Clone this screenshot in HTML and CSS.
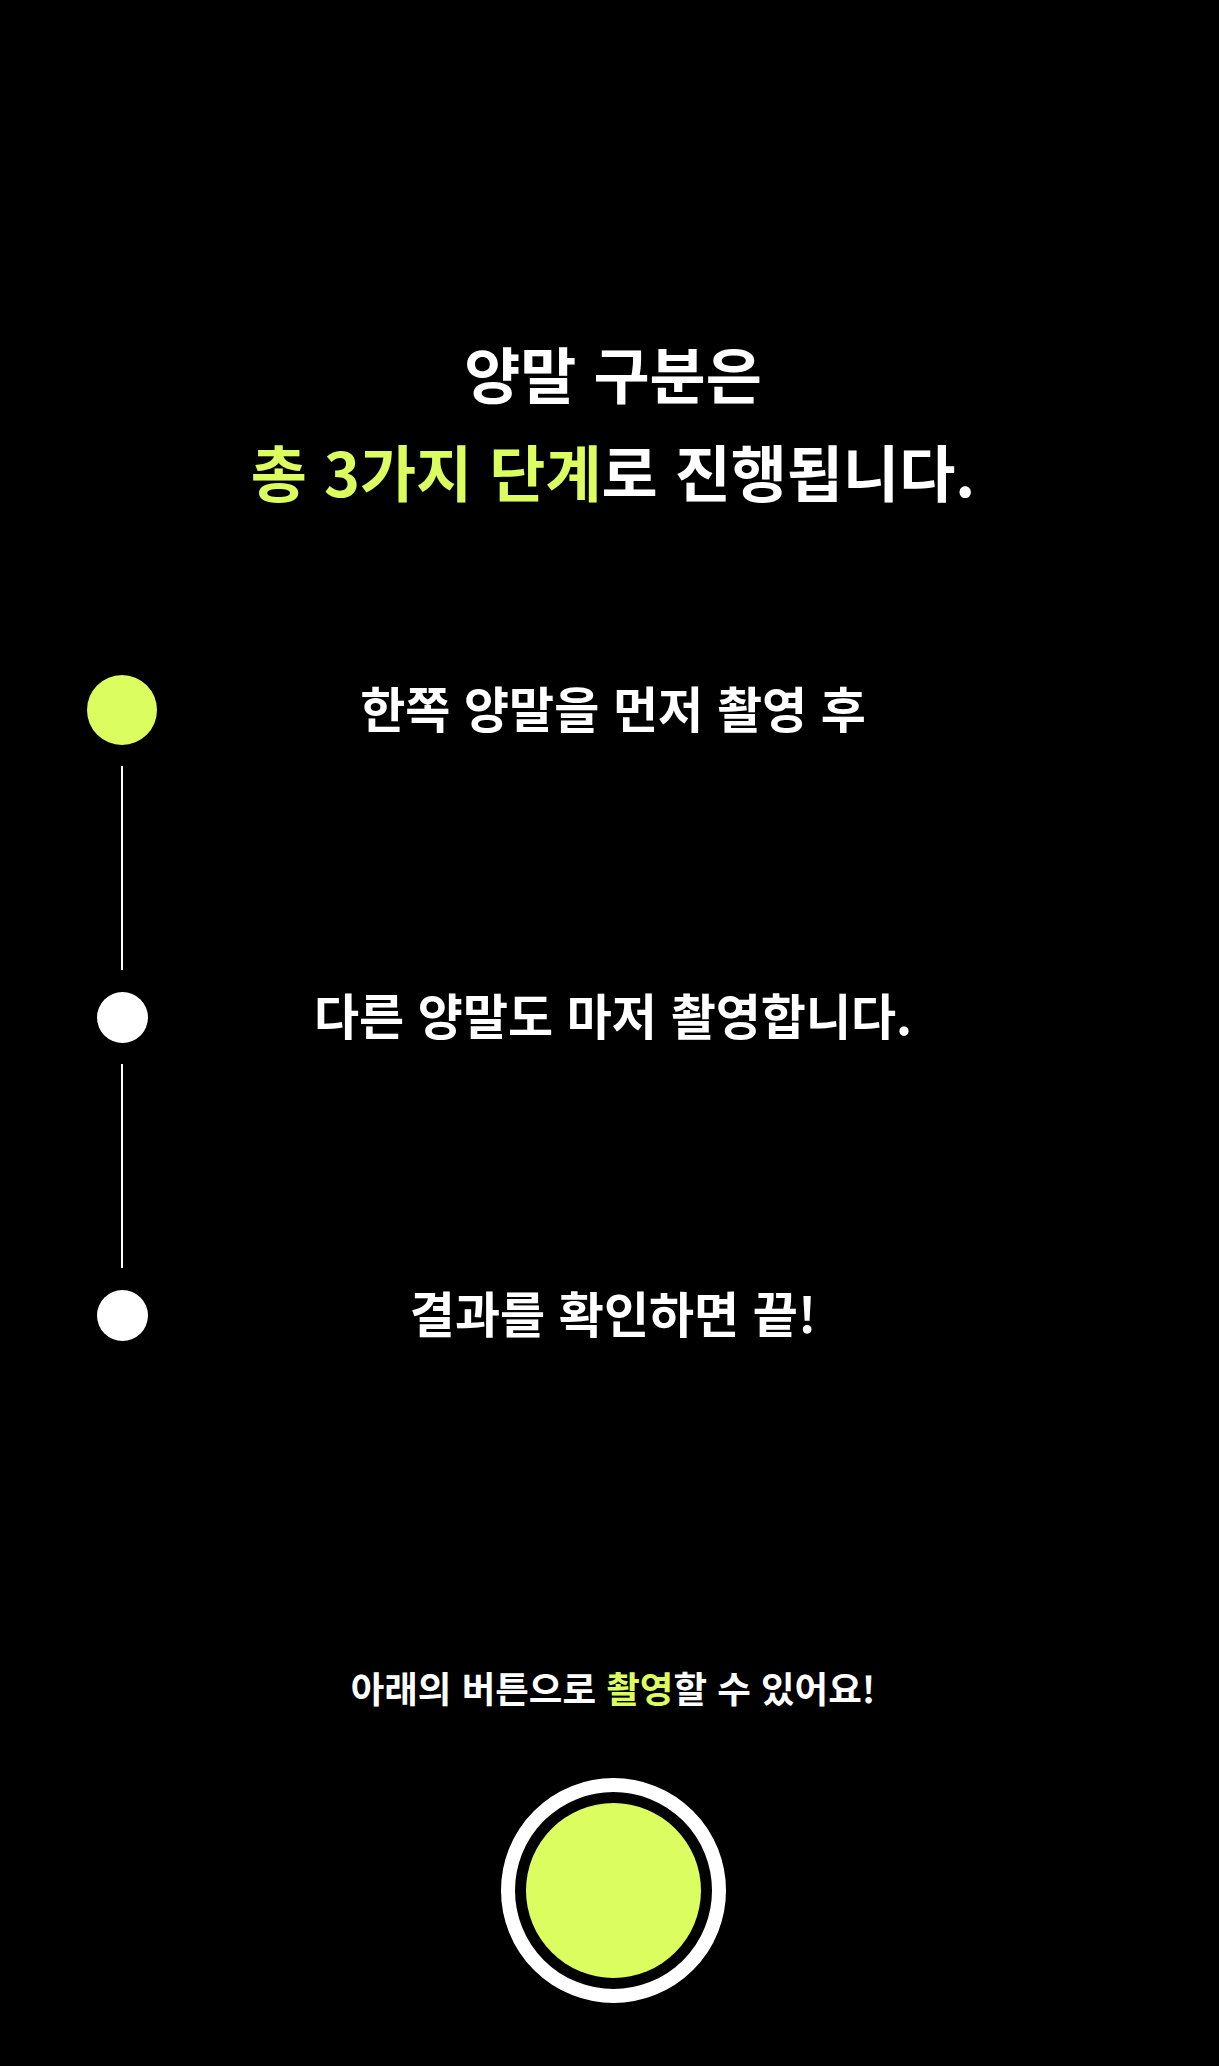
FILE: index.html
```html
<!DOCTYPE html>
<html lang="ko">
<head>
<meta charset="utf-8">
<title>양말 구분</title>
<link rel="stylesheet" href="styles.css">
</head>
<body>
<main class="page">
  <h1 class="title">
    <span class="title-line">양말 구분은</span>
    <span class="title-line"><em class="accent">총 3가지 단계</em>로 진행됩니다.</span>
  </h1>

  <ol class="steps">
    <li class="step">
      <div class="step-mark"><span class="dot dot-active"></span></div>
      <p class="step-text">한쪽 양말을 먼저 촬영 후</p>
      <div></div>
    </li>
    <li class="connector"><span class="line"></span></li>
    <li class="step">
      <div class="step-mark"><span class="dot"></span></div>
      <p class="step-text">다른 양말도 마저 촬영합니다.</p>
      <div></div>
    </li>
    <li class="connector"><span class="line"></span></li>
    <li class="step">
      <div class="step-mark"><span class="dot"></span></div>
      <p class="step-text">결과를 확인하면 끝!</p>
      <div></div>
    </li>
  </ol>

  <p class="hint">아래의 버튼으로 <em class="accent">촬영</em>할 수 있어요!</p>

  <button class="shutter" type="button" aria-label="촬영"><span class="shutter-core"></span></button>
</main>
</body>
</html>
```

FILE: styles.css
```css
html, body {
  margin: 0;
  padding: 0;
  background: #000;
}

body {
  width: 1219px;
  min-height: 2066px;
  color: #fff;
  font-family: "Noto Sans CJK KR", "Noto Sans", sans-serif;
  font-weight: 700;
}

.page {
  padding-left: 7px;
  display: flex;
  flex-direction: column;
  align-items: stretch;
}

.accent {
  font-style: normal;
  color: #dcfd5f;
}

.title {
  margin: 324px 0 0;
  font-size: 61px;
  font-weight: 700;
  line-height: 98px;
  text-align: center;
}

.title-line {
  display: block;
}

.steps {
  list-style: none;
  margin: 155px 0 0;
  padding: 0;
}

.step {
  display: grid;
  grid-template-columns: 1fr auto 1fr;
  align-items: center;
}

.step-mark {
  width: 70px;
  margin-left: 80px;
  display: flex;
  justify-content: center;
  align-items: center;
}

.dot {
  display: block;
  width: 51px;
  height: 51px;
  border-radius: 50%;
  background: #fff;
}

.dot-active {
  width: 70px;
  height: 70px;
  background: #dcfd5f;
}

.step-text {
  margin: 0 0 8px;
  font-size: 49px;
  line-height: 43px;
  white-space: nowrap;
}

.connector {
  padding: 21px 0 22px;
}

.line {
  display: block;
  width: 2px;
  height: 204px;
  margin-left: 114px;
  background: #fff;
}

.hint {
  margin: 322px 0 0;
  font-size: 36.5px;
  line-height: 50px;
  text-align: center;
}

.shutter {
  align-self: center;
  margin-top: 65px;
  padding: 11px;
  width: 225px;
  height: 225px;
  box-sizing: border-box;
  border: 14px solid #fff;
  border-radius: 50%;
  background: #000;
  cursor: pointer;
  display: flex;
}

.shutter-core {
  flex: 1;
  border-radius: 50%;
  background: #dcfd5f;
}
```
